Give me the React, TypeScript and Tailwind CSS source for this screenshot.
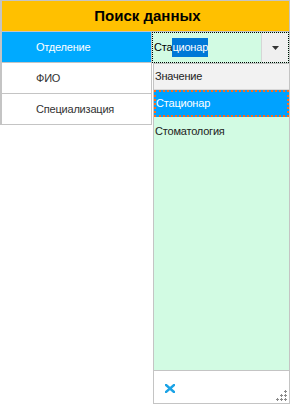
import React from "react";

const font = { fontFamily: '"Liberation Sans", Arial, sans-serif' };

function Grip() {
  const pts = [
    [8, 0],
    [4, 4],
    [8, 4],
    [0, 8],
    [4, 8],
    [8, 8],
  ];
  return (
    <svg width="11" height="11" viewBox="0 0 11 11">
      {pts.map(([x, y], i) => (
        <g key={i} fill="#8a8a8a">
          <rect x={x + 1} y={y} width="1" height="3" />
          <rect x={x} y={y + 1} width="3" height="1" />
        </g>
      ))}
    </svg>
  );
}

export default function App() {
  return (
    <div className="relative w-[290px] h-[404px] bg-white overflow-hidden text-[11px] tracking-[-0.2px]" style={font}>
      <div className="border-l-2 border-t border-r border-[#c4c4c4]">
        <div className="h-[31px] bg-[#ffc000] border-b border-[#c4c4c4] flex items-center justify-center font-bold text-[15px] tracking-normal text-black pl-[4px]">
          Поиск данных
        </div>
        <div className="flex">
          <div className="w-[150px] border-r border-[#c4c4c4]">
            <div className="h-[31px] bg-[#00aaff] text-white flex items-center pl-[34px] border-b border-[#c4c4c4]">
              Отделение
            </div>
            <div className="h-[31px] bg-white text-[#333] flex items-center pl-[34px] border-b border-[#c4c4c4]">
              ФИО
            </div>
            <div className="h-[31px] bg-white text-[#333] flex items-center pl-[34px] border-b border-[#c4c4c4]">
              Специализация
            </div>
          </div>
          <div className="flex-1">
            <div className="h-[31px] border border-dotted border-black bg-[#d2fbe3] flex">
              <div className="flex-1 flex items-center pl-[1px] text-black">
                <span>Ста</span>
                <span className="bg-[#0078d7] text-white py-[1px]">ционар</span>
              </div>
              <div className="w-[27px] bg-[#efefef] border-l border-[#d6d6d6] flex items-center justify-center">
                <svg width="7" height="4" viewBox="0 0 7 4">
                  <path d="M0 0h7L3.5 4z" fill="#333" />
                </svg>
              </div>
            </div>
          </div>
        </div>
      </div>

      <div className="absolute left-[153px] top-[63px] w-[137px] h-[341px] border border-[#c4c4c4] bg-[#d2fbe3] flex flex-col">
        <div className="h-[26px] bg-[#f2f2f2] border-b border-[#d8d8d8] flex items-center pl-[1px] text-[#222]">
          Значение
        </div>
        <div className="h-[27px] bg-[#00a2ff] border-2 border-dotted border-[#ff6a1a] flex items-center text-white">
          Стационар
        </div>
        <div className="h-[28px] flex items-center pl-[1px] text-[#222]">Стоматология</div>
        <div className="flex-1" />
        <div className="h-[33px] bg-white border-t border-[#c4c4c4] flex items-center justify-between pl-[11px] pr-[2px]">
          <svg width="10" height="9" viewBox="0 0 10 9" className="mt-[2px]">
            <path d="M1 1L9 8M9 1L1 8" stroke="#1ba3e6" strokeWidth="2.4" strokeLinecap="square" />
          </svg>
          <div className="self-end mb-[2px]">
            <Grip />
          </div>
        </div>
      </div>
    </div>
  );
}
